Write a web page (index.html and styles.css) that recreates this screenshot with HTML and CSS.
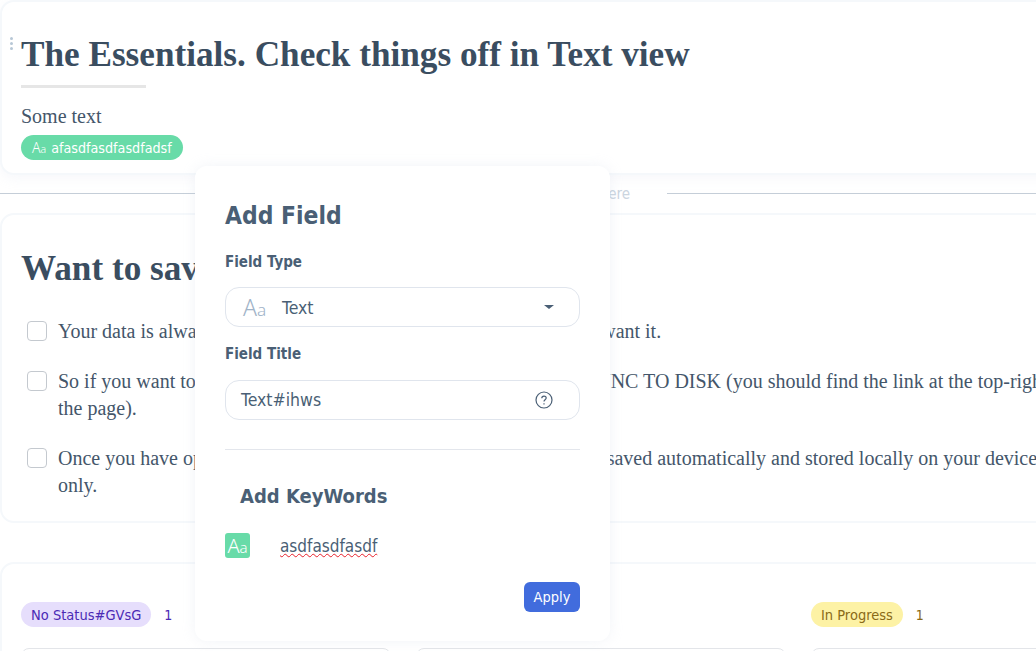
FILE: index.html
```html
<!DOCTYPE html>
<html lang="en">
<head>
    <meta charset="UTF-8">
    <meta name="viewport" content="width=device-width, initial-scale=1.0">
    <title>Add Field</title>
    <link rel="stylesheet" href="styles.css">
</head>
<body>
    <div class="page">
        <div class="card intro">
            <div class="drag-dots"><i></i><i></i><i></i></div>
            <h1>The Essentials. Check things off in Text view</h1>
            <div class="title-rule"></div>
            <p class="intro-text">Some text</p>
            <span class="tag tag-green"><span class="aa aa-small">A<small>a</small></span>afasdfasdfasdfadsf</span>
        </div>

        <div class="drop-line">
            <span class="line"></span>
            <span class="drop-text">Drop here</span>
            <span class="line"></span>
        </div>

        <div class="card save">
            <h2>Want to save your work?</h2>
            <div class="check-row">
                <span class="checkbox"></span>
                <p>Your data is always stored in your browser, and it stays there if you want it.</p>
            </div>
            <div class="check-row">
                <span class="checkbox"></span>
                <p>So if you want to keep a copy of your work on the drive, click on SYNC TO DISK (you should find the link at the top-right of<br>the page).</p>
            </div>
            <div class="check-row">
                <span class="checkbox"></span>
                <p>Once you have opened a file from your device, new changes will be saved automatically and stored locally on your device<br>only.</p>
            </div>
        </div>

        <div class="card board">
            <div class="board-col">
                <div class="col-head">
                    <span class="pill pill-purple">No Status#GVsG</span>
                    <span class="count count-purple">1</span>
                </div>
                <div class="col-item"></div>
            </div>
            <div class="board-col">
                <div class="col-head">
                    <span class="pill pill-purple">Not Started</span>
                    <span class="count count-purple">1</span>
                </div>
                <div class="col-item"></div>
            </div>
            <div class="board-col">
                <div class="col-head">
                    <span class="pill pill-yellow">In Progress</span>
                    <span class="count count-yellow">1</span>
                </div>
                <div class="col-item"></div>
            </div>
        </div>
    </div>

    <div class="modal">
        <h3>Add Field</h3>
        <label class="field-label">Field Type</label>
        <div class="field-box">
            <span class="aa aa-type">A<small>a</small></span>
            <span class="field-value">Text</span>
            <span class="caret"></span>
        </div>
        <label class="field-label title-label">Field Title</label>
        <div class="field-box title-box">
            <span class="field-value">Text#ihws</span>
            <svg class="help" width="18" height="18" viewBox="0 0 18 18" fill="none" stroke="#4a5f75" stroke-width="1.2">
                <circle cx="9" cy="9" r="8"/>
                <path d="M6.8 7.2c0-1.3 1-2.1 2.2-2.1s2.2.8 2.2 2c0 1.7-2.2 1.7-2.2 3.4"/>
                <path d="M9 12.2v1.3"/>
            </svg>
        </div>
        <div class="modal-rule"></div>
        <h4>Add KeyWords</h4>
        <div class="keyword">
            <span class="aa aa-key">A<small>a</small></span>
            <span class="keyword-text">asdfasdfasdf</span>
        </div>
        <div class="modal-foot">
            <button class="apply">Apply</button>
        </div>
    </div>
</body>
</html>
```

FILE: styles.css
```css
body {
    margin: 0;
    height: 651px;
    overflow: hidden;
    background-color: #fff;
    color: #44566a;
    font-family: "Liberation Serif", serif;
    position: relative;
}
.page {
    width: 1193px;
}
.card {
    background-color: #fff;
    border: 2px solid #f5f8fb;
    border-radius: 14px;
    box-sizing: border-box;
    position: relative;
}
.intro {
    height: 175px;
    padding: 33px 19px 0;
    box-shadow: 0 4px 12px rgba(200, 210, 225, 0.15);
}
.drag-dots {
    position: absolute;
    left: 8px;
    top: 35px;
    display: flex;
    flex-direction: column;
    gap: 2px;
}
.drag-dots i {
    width: 3px;
    height: 3px;
    border-radius: 50%;
    background-color: #b7c7d6;
}
h1 {
    margin: 0;
    font-size: 35.2px;
    line-height: 40px;
    font-weight: bold;
    color: #3a4d60;
}
.title-rule {
    width: 125px;
    height: 3px;
    margin-top: 10px;
    background-color: #e6e6e6;
}
.intro-text {
    margin: 15px 0 0;
    font-size: 20px;
    line-height: 27px;
}
.tag {
    display: inline-flex;
    align-items: center;
    height: 25px;
    margin-top: 5px;
    padding: 0 11px;
    border-radius: 13px;
    font-family: "DejaVu Sans Condensed", "Noto Sans", sans-serif;
    font-size: 14.2px;
}
.tag-green {
    background-color: #68dba8;
    color: #fff;
}
.aa {
    font-family: "Noto Sans", sans-serif;
    font-weight: 300;
    line-height: 1;
}
.aa small {
    font-size: 0.75em;
}
.aa-small {
    font-size: 14px;
    margin-right: 5px;
}
.drop-line {
    display: flex;
    align-items: center;
    height: 38px;
}
.drop-line .line {
    flex: 1;
    height: 1px;
    margin-top: -1px;
    background-color: #c5ced8;
}
.drop-text {
    margin: 0 37px;
    font-family: "DejaVu Sans Condensed", "Noto Sans", sans-serif;
    font-size: 15px;
    color: #cbd5df;
}
.save {
    height: 310px;
    padding: 34px 19px 0;
}
h2 {
    margin: 0 0 29px;
    font-size: 35.2px;
    line-height: 40px;
    font-weight: bold;
    color: #3a4d60;
}
.check-row {
    display: flex;
    gap: 11px;
    margin-bottom: 23px;
    padding-left: 6px;
}
.check-row p {
    margin: 0;
    font-size: 20px;
    line-height: 27px;
}
.checkbox {
    width: 18px;
    height: 18px;
    flex-shrink: 0;
    margin-top: 3px;
    background-color: #fff;
    border: 1px solid #c4c9cf;
    border-radius: 4px;
}
.board {
    display: flex;
    gap: 25px;
    height: 200px;
    margin-top: 39px;
    padding: 38px 19px 0;
}
.board-col {
    width: 370px;
    flex-shrink: 0;
}
.col-head {
    display: flex;
    align-items: center;
    gap: 13px;
    height: 25px;
    margin-bottom: 21px;
}
.pill {
    display: inline-flex;
    align-items: center;
    height: 25px;
    padding: 0 10px;
    border-radius: 13px;
    font-family: "DejaVu Sans Condensed", "Noto Sans", sans-serif;
    font-size: 14.5px;
}
.pill-purple {
    background-color: #e6defc;
    color: #4b2bb5;
}
.pill-yellow {
    background-color: #fdf2a5;
    color: #8a6a17;
}
.count {
    font-family: "DejaVu Sans Condensed", "Noto Sans", sans-serif;
    font-size: 14px;
}
.count-purple {
    color: #4b2bb5;
}
.count-yellow {
    color: #8a6a17;
}
.col-item {
    height: 80px;
    border: 1px solid #e3e5e9;
    border-radius: 8px;
}

/* modal sits over the page */
.modal {
    position: absolute;
    left: 195px;
    top: 166px;
    width: 415px;
    height: 475px;
    box-sizing: border-box;
    padding: 33px 30px 0;
    background-color: #fff;
    border-radius: 12px;
    box-shadow: 0 0 14px rgba(190, 200, 220, 0.2);
    font-family: "DejaVu Sans Condensed", "Noto Sans", sans-serif;
    color: #4a5f75;
}
h3 {
    margin: 0;
    font-size: 24.4px;
    line-height: 34px;
    font-weight: bold;
}
.field-label {
    display: block;
    margin-top: 19px;
    font-size: 15px;
    line-height: 20px;
    font-weight: bold;
}
.title-label {
    margin-top: 17px;
}
.field-box {
    display: flex;
    align-items: center;
    height: 40px;
    box-sizing: border-box;
    margin-top: 15px;
    padding: 0 15px;
    border: 1px solid #e0e5ed;
    border-radius: 14px;
    font-size: 17.5px;
}
.title-box {
    margin-top: 16px;
}
.aa-type {
    width: 41px;
    padding-left: 2px;
    box-sizing: border-box;
    font-size: 23px;
    color: #a0b3c8;
}
.field-value {
    flex: 1;
    padding-top: 1px;
}
.title-box .field-value {
    padding-top: 0;
}
.caret {
    width: 0;
    height: 0;
    margin-right: 10px;
    border-left: 5px solid transparent;
    border-right: 5px solid transparent;
    border-top: 4px solid #4a5f75;
}
.help {
    margin-right: 11px;
}
.modal-rule {
    height: 1px;
    margin-top: 29px;
    background-color: #e3e6ec;
}
h4 {
    margin: 29px 0 0 15px;
    font-size: 20px;
    line-height: 34px;
    font-weight: bold;
}
.keyword {
    display: flex;
    align-items: center;
    gap: 30px;
    margin-top: 20px;
}
.aa-key {
    display: flex;
    align-items: baseline;
    justify-content: center;
    width: 25px;
    height: 25px;
    box-sizing: border-box;
    padding-top: 3px;
    border-radius: 3px;
    background-color: #68dba8;
    color: #fff;
    font-size: 20px;
}
.keyword-text {
    padding-top: 1px;
    font-size: 17px;
    text-decoration: underline wavy #e8202a 1px;
    text-underline-offset: 1px;
}
.modal-foot {
    display: flex;
    justify-content: flex-end;
    margin-top: 24px;
}
.apply {
    width: 56px;
    height: 30px;
    padding: 0;
    border: none;
    border-radius: 6px;
    background-color: #416cdd;
    color: #fff;
    font-family: "DejaVu Sans Condensed", "Noto Sans", sans-serif;
    font-size: 14.5px;
}
```
